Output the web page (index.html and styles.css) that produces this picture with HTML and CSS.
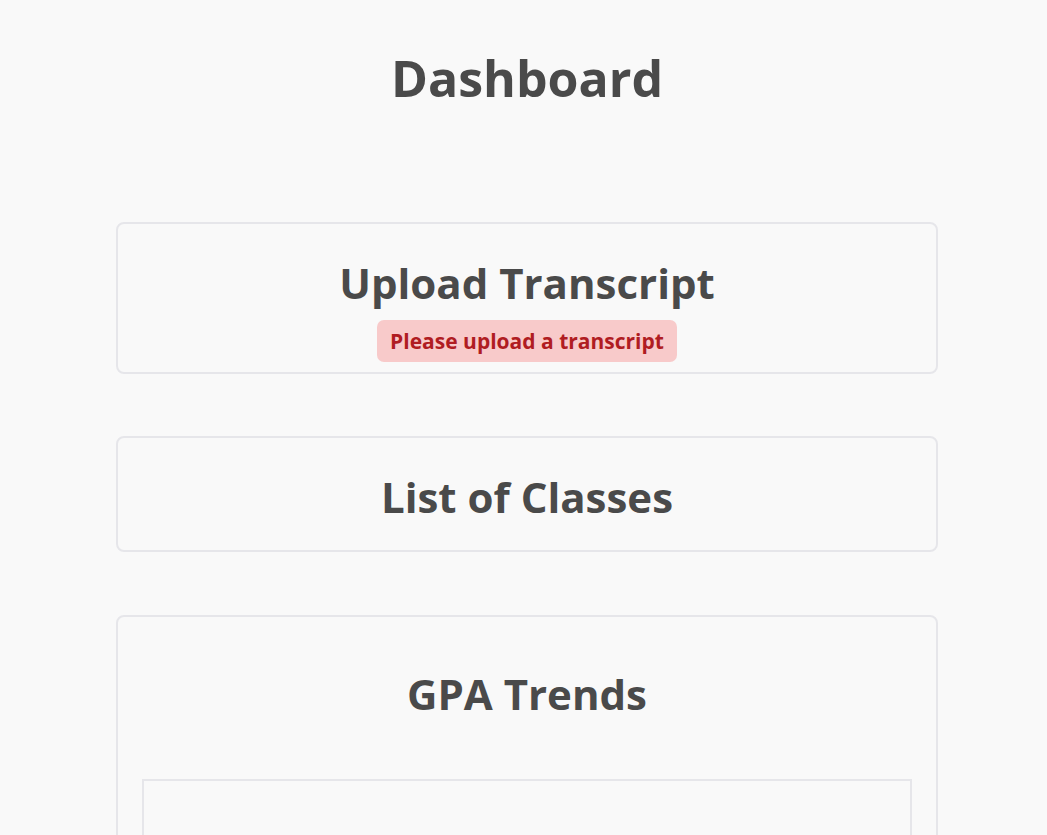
FILE: index.html
```html
<!DOCTYPE html>
<html lang="en">
<head>
<meta charset="utf-8">
<title>Dashboard</title>
<link rel="stylesheet" href="styles.css">
</head>
<body>
<div class="page">
  <main class="container">
    <h1 class="page-title">Dashboard</h1>
    <section class="card card-upload">
      <h2 class="card-title">Upload Transcript</h2>
      <div class="alert">Please upload a transcript</div>
    </section>
    <section class="card card-classes">
      <h2 class="card-title">List of Classes</h2>
    </section>
    <section class="card card-gpa">
      <h2 class="card-title">GPA Trends</h2>
      <div class="chart-box"></div>
    </section>
  </main>
</div>
</body>
</html>
```

FILE: styles.css
```css
html, body {
  margin: 0;
  padding: 0;
  background: #f9f9f9;
}
body {
  font-family: "Open Sans", "Noto Sans", sans-serif;
  color: #4a4a4a;
}
.page {
  padding-left: 7px;
}
.container {
  width: 822px;
  margin: 0 auto;
  display: flex;
  flex-direction: column;
  align-items: stretch;
}
.page-title {
  margin: 40px 0 0;
  font-size: 50px;
  line-height: 76px;
  font-weight: 700;
  text-align: center;
}
.card {
  box-sizing: border-box;
  border: 2px solid #e6e6ea;
  border-radius: 8px;
  display: flex;
  flex-direction: column;
  align-items: center;
}
.card-upload {
  margin-top: 106px;
  height: 152px;
  padding-top: 31px;
}
.card-classes {
  margin-top: 62px;
  height: 116px;
  padding-top: 31px;
}
.card-gpa {
  margin-top: 63px;
  padding: 49px 24px 0;
  align-items: stretch;
}
.card-title {
  margin: 0;
  font-size: 42px;
  line-height: 56px;
  font-weight: 700;
  text-align: center;
}
.alert {
  margin-top: 9px;
  background: #f8caca;
  color: #b01c22;
  font-size: 21px;
  font-weight: 700;
  line-height: 42px;
  padding: 0 13px;
  border-radius: 7px;
}
.chart-box {
  margin-top: 57px;
  height: 300px;
  border: 2px solid #e6e6ea;
}
```
